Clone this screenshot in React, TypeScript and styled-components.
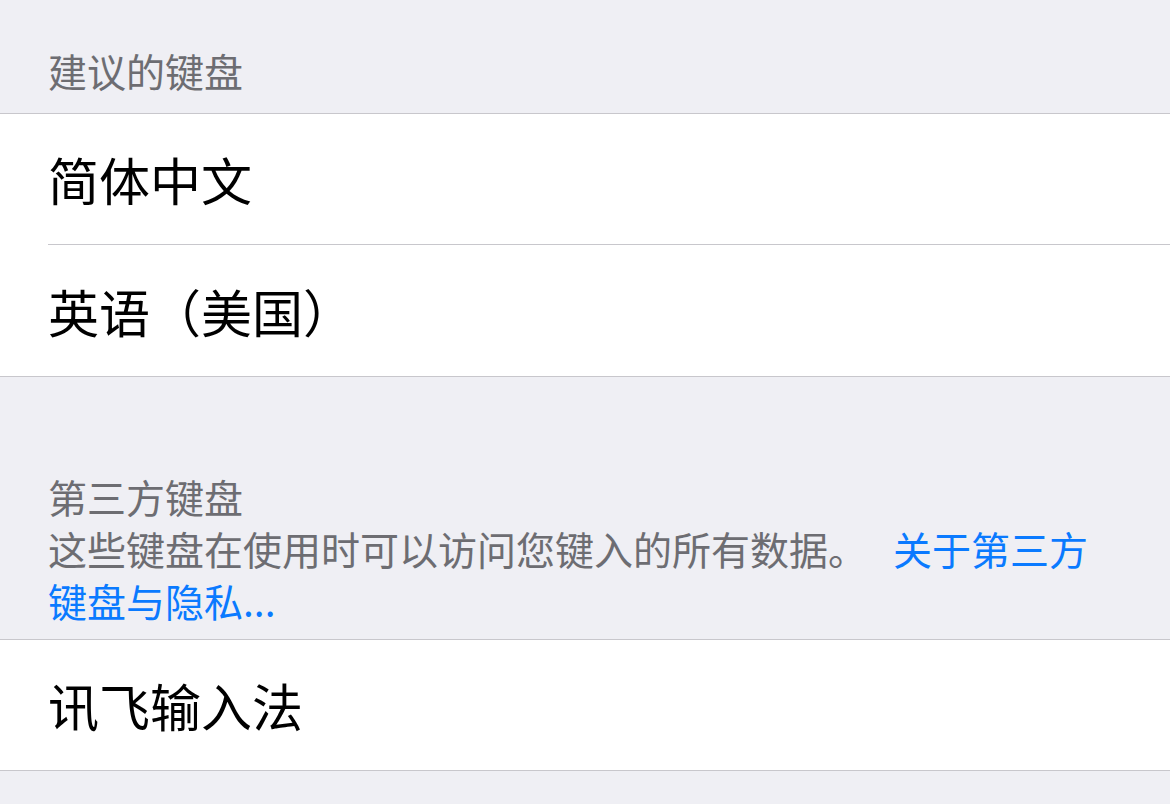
import React from 'react'
import styled, { createGlobalStyle } from 'styled-components'

const GlobalStyle = createGlobalStyle`
  html, body {
    margin: 0;
    padding: 0;
    background: #efeff4;
  }
  body {
    font-family: "Noto Sans CJK SC", "Noto Sans", sans-serif;
    -webkit-font-smoothing: antialiased;
  }
`

const Page = styled.div`
  width: 1170px;
  min-height: 804px;
  background: #efeff4;
`

const SectionHeader = styled.div<{ $top: number; $bottom: number }>`
  padding: ${p => p.$top}px 60px ${p => p.$bottom}px 48px;
  font-size: 39px;
  line-height: 52px;
  color: #6d6d72;
`

const Link = styled.span`
  color: #0a7aff;
  margin-left: 26px;
`

const Group = styled.div`
  background: #ffffff;
  border-top: 1px solid #c8c7cc;
  border-bottom: 1px solid #c8c7cc;
`

const Row = styled.div`
  padding-left: 48px;
`

const RowInner = styled.div<{ $last?: boolean; $height: number }>`
  box-sizing: border-box;
  height: ${p => p.$height}px;
  display: flex;
  align-items: center;
  font-size: 51px;
  color: #000000;
  border-bottom: ${p => (p.$last ? 'none' : '1px solid #c8c7cc')};
`

const Cell = ({
  label,
  last,
  height = 131
}: {
  label: string
  last?: boolean
  height?: number
}) => (
  <Row>
    <RowInner $last={last} $height={height}>
      {label}
    </RowInner>
  </Row>
)

const App = () => (
  <Page>
    <GlobalStyle />
    <SectionHeader $top={44} $bottom={17}>
      建议的键盘
    </SectionHeader>
    <Group>
      <Cell label="简体中文" />
      <Cell label="英语（美国）" last />
    </Group>

    <SectionHeader $top={93} $bottom={13}>
      第三方键盘
      <br />
      这些键盘在使用时可以访问您键入的所有数据。<Link>关于第三方键盘与隐私...</Link>
    </SectionHeader>
    <Group>
      <Cell label="讯飞输入法" last height={130} />
    </Group>
  </Page>
)

export default App
